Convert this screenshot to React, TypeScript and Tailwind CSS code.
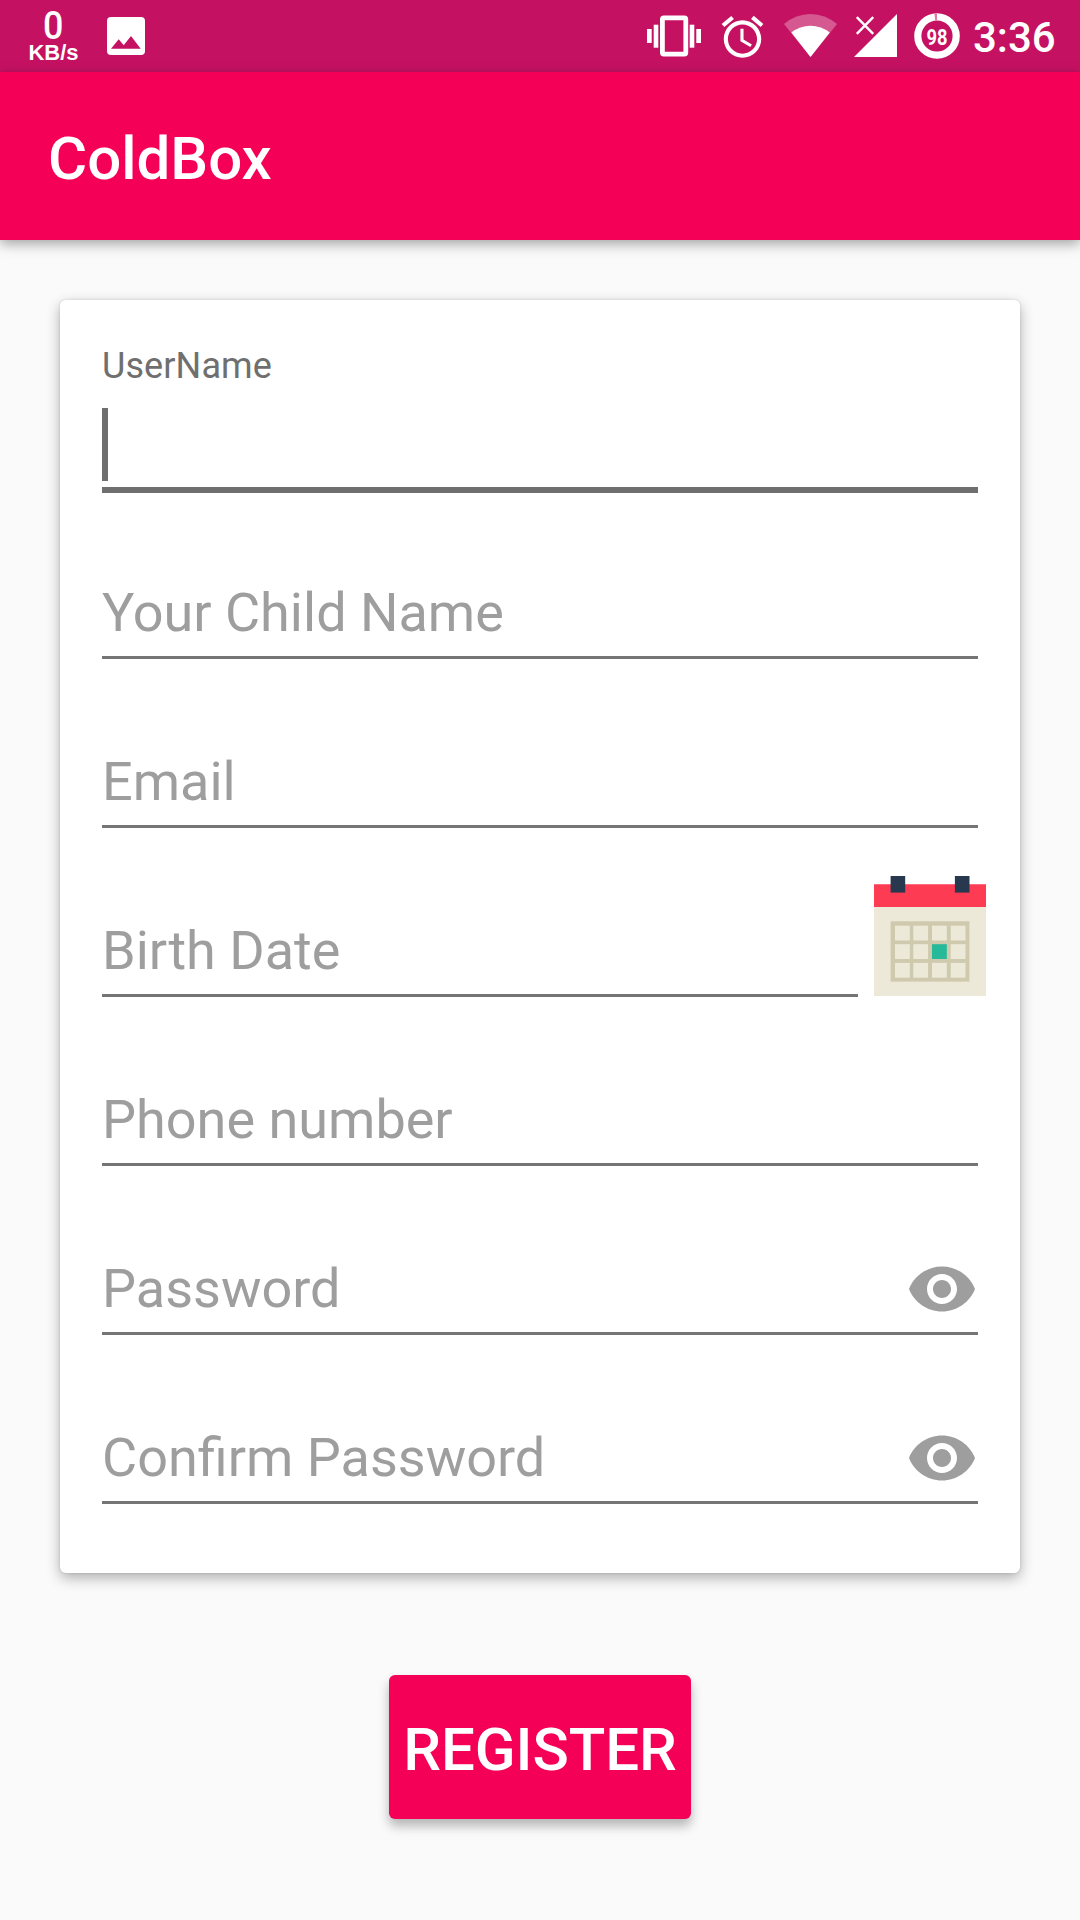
import React from "react";

function StatusBar() {
  return (
    <div className="flex h-[72px] items-start bg-[#c51162] pl-[28px] pr-[24px] text-white">
      <div className="flex w-[51px] flex-col items-center pt-[10px]">
        <span className="h-[32px] scale-x-[0.92] text-[39px] font-medium leading-[32px]">0</span>
        <span className="font-['Liberation_Sans',sans-serif] text-[22px] font-bold leading-[22px]">KB/s</span>
      </div>
      <svg className="ml-[28px] mt-[17px] h-[38px] w-[38px]" viewBox="0 0 38 38">
        <rect width="38" height="38" rx="4" fill="#fff" />
        <path d="M4 31.7L11.7 22.3L16.7 28.3L24 19L33.7 31.7Z" fill="#c51162" />
      </svg>
      <div className="ml-auto flex h-[72px] items-start gap-4">
        <svg className="h-[72px] w-[54px]" viewBox="647 0 54 72" fill="#fff">
          <rect x="662.4" y="17.8" width="23.4" height="36.3" rx="1.5" fill="none" stroke="#fff" strokeWidth="4.8" />
          <rect x="647" y="29" width="4.7" height="14" />
          <rect x="653.7" y="24.7" width="4.6" height="23" />
          <rect x="689.7" y="24.7" width="4.6" height="23" />
          <rect x="696.3" y="29" width="4.7" height="14" />
        </svg>
        <svg className="mt-[11.5px] h-[50px] w-[51px]" viewBox="0 0 24 24" fill="#fff">
          <path d="M22 5.72l-4.6-3.86-1.29 1.53 4.6 3.86L22 5.72zM7.88 3.39L6.6 1.86 2 5.71l1.29 1.53 4.59-3.85zM12.5 8H11v6l4.75 2.85.75-1.23-4-2.37V8zM12 4c-4.97 0-9 4.03-9 9s4.02 9 9 9c4.97 0 9-4.03 9-9s-4.03-9-9-9zm0 16c-3.87 0-7-3.13-7-7s3.13-7 7-7 7 3.13 7 7-3.13 7-7 7z" />
        </svg>
        <svg className="h-[72px] w-[53px]" viewBox="784 0 53 72" fill="#fff">
          <path d="M784 24Q796 14 810.5 14T837 24L810.5 57Z" fillOpacity="0.3" />
          <path d="M791.3 32.5Q800 25.7 810.5 25.7T829.8 32.5L810.5 57Z" />
        </svg>
        <svg className="h-[72px] w-[45px]" viewBox="853 0 45 72" fill="#fff">
          <path d="M854 57L897 14V57Z" />
          <path d="M856.8 17.2L873.2 33.8M873.2 17.2L856.8 33.8" stroke="#fff" strokeWidth="2.4" />
        </svg>
        <svg className="h-[72px] w-[46px]" viewBox="914 0 46 72">
          <circle cx="937" cy="36" r="19.2" fill="none" stroke="#fff" strokeWidth="7.2" />
          <path d="M937 13.4V20.5H935.2L934.4 13.4Z" fill="#df78a6" />
          <text x="926.5" y="44.7" fontFamily="Roboto, sans-serif" fontWeight="700" fontSize="21.5" textLength="21" lengthAdjust="spacingAndGlyphs" fill="#fff">98</text>
        </svg>
        <span className="-ml-[3px] w-[83px] whitespace-nowrap text-[42px] font-medium leading-[76px]">3:36</span>
      </div>
    </div>
  );
}

function EyeIcon() {
  return (
    <svg className="-mb-[5px] h-[72px] w-[72px]" viewBox="0 0 24 24" fill="#9e9e9e">
      <path d="M12 4.5C7 4.5 2.73 7.61 1 12c1.73 4.39 6 7.5 11 7.5s9.27-3.11 11-7.5c-1.73-4.39-6-7.5-11-7.5zM12 17c-2.76 0-5-2.24-5-5s2.24-5 5-5 5 2.24 5 5-2.24 5-5 5zm0-8c-1.66 0-3 1.34-3 3s1.34 3 3 3 3-1.34 3-3-1.34-3-3-3z" />
    </svg>
  );
}

const columns = [895, 913.3, 932, 950.7];
const rows = [925.7, 944.2, 962.9];

function CalendarIcon() {
  return (
    <svg className="-mr-2 mb-px ml-4 h-[120px] w-[112px] shrink-0" viewBox="874 876 112 120">
      <rect x="874" y="884" width="112" height="112" fill="#ece9d8" />
      <rect x="874" y="884" width="112" height="23" fill="#fd3b52" />
      <rect x="874" y="884" width="112" height="1" fill="#fd6c7e" />
      <rect x="890.6" y="876" width="14.6" height="16.6" fill="#28384f" />
      <rect x="954.9" y="876" width="14.6" height="16.6" fill="#28384f" />
      <rect x="890.6" y="921.3" width="78.8" height="60.3" fill="#cfc9ae" />
      {rows.map((y, r) =>
        columns.map((x, c) => (
          <rect key={`${r}-${c}`} x={x} y={y} width="14.8" height="14.8" fill={r === 1 && c === 2 ? "#26b99a" : "#ece9d8"} />
        ))
      )}
    </svg>
  );
}

function Field({ label, password = false, first = false }: { label: string; password?: boolean; first?: boolean }) {
  return (
    <div className={`flex flex-none items-end justify-between border-b-[3px] border-[#757575] pb-3 ${first ? "h-[166px]" : "h-[169px]"}`}>
      <span className="text-[54px] leading-[63px] text-[#9e9e9e]">{label}</span>
      {password && <EyeIcon />}
    </div>
  );
}

export default function App() {
  return (
    <div className="flex h-[1920px] w-[1080px] flex-col overflow-hidden bg-[#fafafa] font-[Roboto,sans-serif]">
      <StatusBar />
      <header className="h-[168px] bg-[#f50057] pl-12 pt-[4px] shadow-[0_4px_12px_rgba(0,0,0,0.35)]">
        <h1 className="text-[60px] font-medium leading-[166px] text-white">ColdBox</h1>
      </header>
      <main className="flex flex-col items-center pt-[60px]">
        <form className="flex h-[1273px] w-[960px] flex-col rounded-[6px] bg-white px-[42px] pt-[42px] shadow-[0_5px_14px_rgba(0,0,0,0.3),0_0_3px_rgba(0,0,0,0.12)]">
          <div className="flex h-[151px] flex-col border-b-[6px] border-[#6f6f6f]">
            <label className="text-[36px] leading-[48px] tracking-[0.1px] text-[#6f6f6f]">UserName</label>
            <div className="mt-[18px] h-[73px] w-[6px] bg-[#6f6f6f]" />
          </div>
          <Field label="Your Child Name" first />
          <Field label="Email" />
          <div className="flex items-end">
            <div className="w-[756px]">
              <Field label="Birth Date" />
            </div>
            <CalendarIcon />
          </div>
          <Field label="Phone number" />
          <Field label="Password" password />
          <Field label="Confirm Password" password />
        </form>
        <button className="mt-[102px] h-[144px] w-[302px] rounded-[6px] bg-[#f50057] pt-[5px] text-[60px] font-medium leading-[139px] tracking-[-0.1px] text-white shadow-[0_7px_11px_rgba(0,0,0,0.28)]">
          REGISTER
        </button>
      </main>
    </div>
  );
}
